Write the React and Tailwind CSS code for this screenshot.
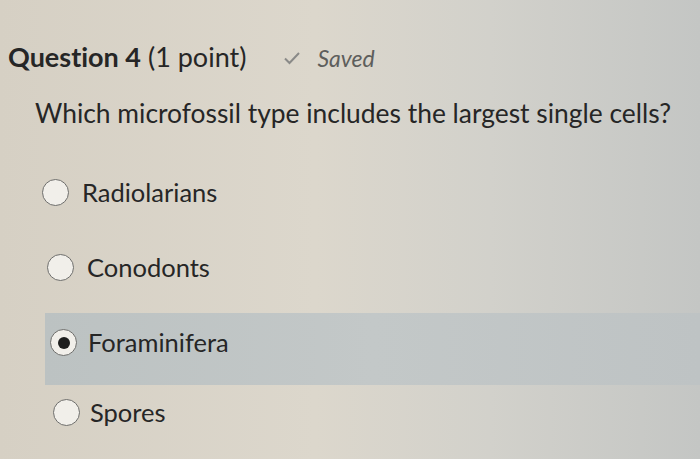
const options = [
  { label: "Radiolarians", row: "h-[75px] pl-[42px] gap-[13px]" },
  { label: "Conodonts", row: "h-[76px] pl-[47px] gap-[13px]" },
  {
    label: "Foraminifera",
    row: "mt-[7px] h-[72px] pb-[12px] ml-[45px] pl-[5px] gap-[11px] bg-[linear-gradient(90deg,#bcc2c2,#c3c8c8_50%,#bec3c4)]",
    selected: true,
  },
  { label: "Spores", row: "h-[56px] pl-[53px] gap-[10px]" },
];

const Radio = ({ selected }) => (
  <span className="w-[27px] h-[27px] rounded-full border-[1.5px] border-[#6e6e6c] bg-[#f1efea] flex items-center justify-center shrink-0">
    {selected && <span className="w-[12px] h-[12px] rounded-full bg-[#1e1e1e]" />}
  </span>
);

export default function App() {
  return (
    <div
      className="w-[700px] h-[459px] overflow-hidden bg-[linear-gradient(90deg,#d6d0c4_0%,#dcd7cc_45%,#d2d1cb_70%,#c4c6c4_100%)] text-[#262626] [font-variant-ligatures:none]"
      style={{ fontFamily: "Lato, 'Open Sans', sans-serif" }}
    >
      <div className="flex items-baseline pl-[8px] pt-[40px]">
        <span className="text-[27px] leading-[34px]">
          <span className="font-bold">Question 4</span> (1 point)
        </span>
        <span className="ml-[37px] flex items-baseline gap-[16px] text-[#5e5e5c]">
          <svg width="18" height="14" viewBox="0 0 18 14" className="self-center">
            <path d="M2 7.5 L6.5 12 L16 2" fill="none" stroke="#8a8a88" strokeWidth="2" />
          </svg>
          <span className="italic text-[23px]">Saved</span>
        </span>
      </div>

      <p className="pl-[35px] pt-[20px] text-[26.4px] leading-[34px]">
        Which microfossil type includes the largest single cells?
      </p>

      <div className="pt-[25px] flex flex-col">
        {options.map((o) => (
          <div key={o.label} className={`flex items-center ${o.row}`}>
            <Radio selected={o.selected} />
            <span className="text-[25.5px]">{o.label}</span>
          </div>
        ))}
      </div>
    </div>
  );
}
